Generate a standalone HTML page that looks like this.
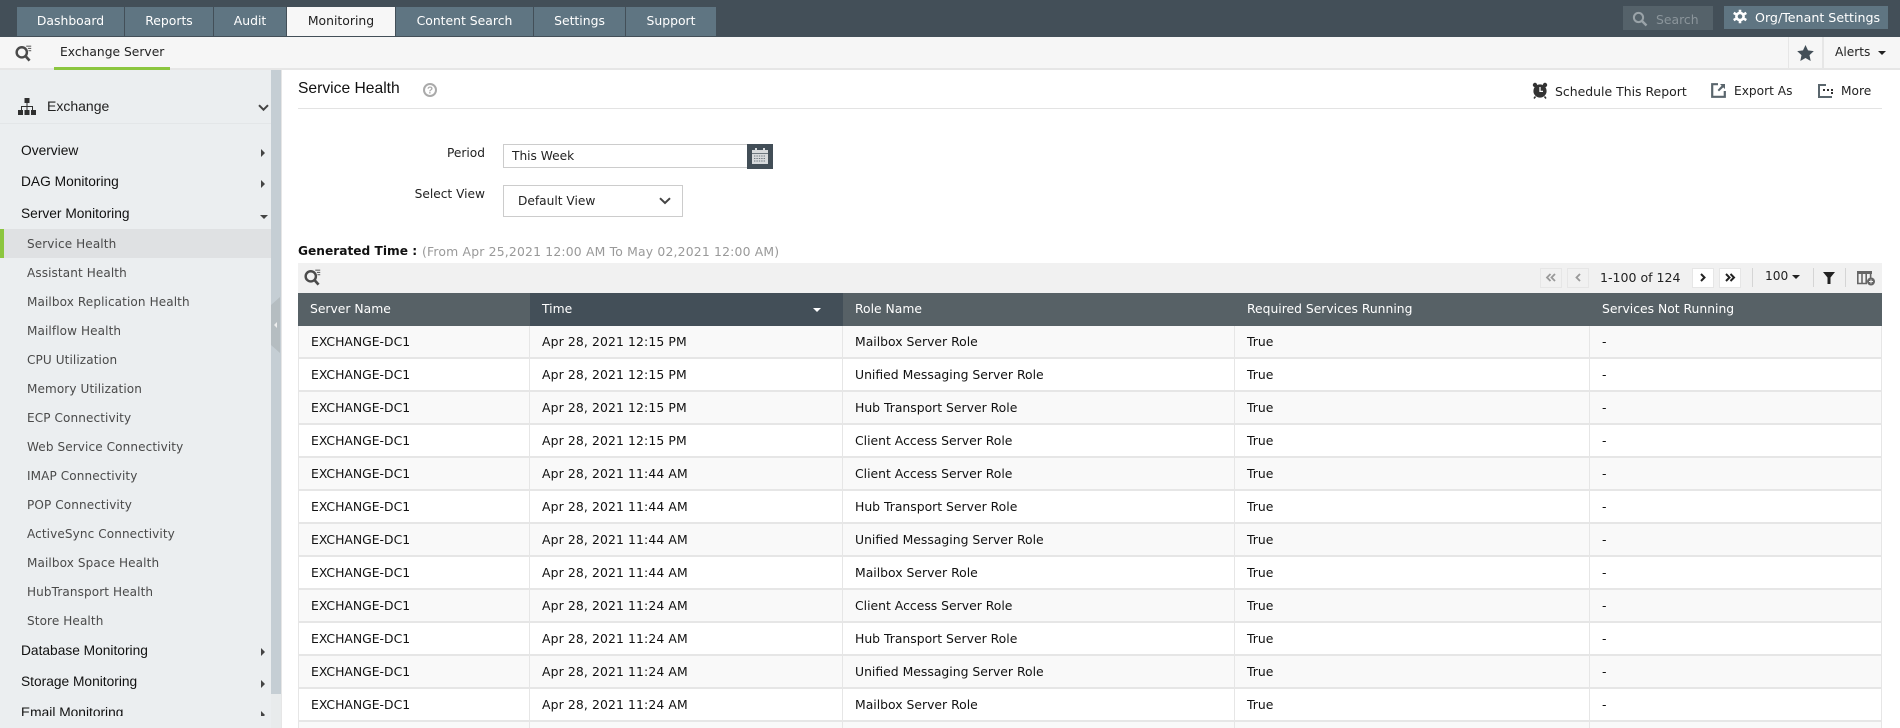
<!DOCTYPE html>
<html><head><meta charset="utf-8"><title>Service Health</title>
<style>
*{box-sizing:border-box}
html,body{margin:0;padding:0;width:1900px;height:728px;overflow:hidden;background:#fff}
body{position:relative;font-family:"DejaVu Sans","Liberation Sans",sans-serif;font-size:12px;color:#111}
.a{position:absolute;white-space:nowrap}
svg{position:absolute;display:block}
.tab{position:absolute;top:7px;height:29px;background:#5f7582;color:#fff;text-align:center;line-height:28px;font-size:12.4px}
.hd{position:absolute;left:21px;font-family:"Liberation Sans",sans-serif;font-size:13.75px;color:#111;line-height:16px;white-space:nowrap}
.sub{position:absolute;left:27px;font-size:12.05px;color:#4a4a4a;line-height:16px;white-space:nowrap;letter-spacing:.1px}
table{position:absolute;left:298px;top:293px;width:1584px;border-collapse:separate;border-spacing:0;table-layout:fixed}
th{height:33px;background:#576166;color:#fff;font-weight:normal;text-align:left;padding:0 0 2px 12px;font-size:12.35px}
td{height:33px;padding:0 0 0 12px;border-right:1px solid #e6e6e6;border-bottom:2px solid #e6e6e6;font-size:12.4px;color:#111;white-space:nowrap;overflow:hidden}
td:first-child{border-left:1px solid #e6e6e6}
td:nth-child(2){letter-spacing:.12px}
tr:nth-child(odd) td{background:#f9f9f9}
tr:nth-child(even) td{background:#fff}
.pg{position:absolute;top:268px;width:22px;height:20px;border:1px solid #e6e6e6;background:#fff}
.div{position:absolute;top:268px;width:1px;height:19px;background:#d5d5d5}
</style></head><body>

<div class="a" style="left:0;top:0;width:1900px;height:37px;background:#434f58"></div>
<div class="tab" style="left:17px;width:107px">Dashboard</div>
<div class="tab" style="left:125px;width:88px">Reports</div>
<div class="tab" style="left:214px;width:72px">Audit</div>
<div class="tab" style="left:287px;width:108px;background:#f7f7f7;color:#222">Monitoring</div>
<div class="tab" style="left:396px;width:137px">Content Search</div>
<div class="tab" style="left:534px;width:91px">Settings</div>
<div class="tab" style="left:626px;width:90px">Support</div>

<div class="a" style="left:1623px;top:6px;width:90px;height:24px;background:#55626a"></div>
<svg style="left:1632px;top:11px" width="16" height="16" viewBox="0 0 16 16"><circle cx="6.5" cy="6.5" r="4.6" fill="none" stroke="#9aa3a8" stroke-width="2"/><path d="M10 10l4.5 4.5" stroke="#9aa3a8" stroke-width="2.4"/></svg>
<div class="a" style="left:1656px;top:11px;font-size:12.4px;color:#8b959b;line-height:17px">Search</div>
<div class="a" style="left:1724px;top:6px;width:164px;height:23px;background:#5f7582"></div>
<svg style="left:1733px;top:9px" width="14" height="15" viewBox="0 0 14 14"><circle cx="7" cy="7" r="3.6" fill="none" stroke="#fff" stroke-width="2.6"/><path d="M7 .3v2.6M7 11v2.7M.7 3.4l2.3 1.3M11 9.3l2.3 1.3M.7 10.6L3 9.3M11 4.7l2.3-1.3" stroke="#fff" stroke-width="2.6"/></svg>
<div class="a" style="left:1755px;top:9px;font-size:12.65px;color:#fff;line-height:17px">Org/Tenant Settings</div>

<div class="a" style="left:0;top:37px;width:1900px;height:33px;background:#f6f6f6;border-bottom:2px solid #e6e6e6"></div>
<svg style="left:14px;top:44px" width="20" height="20" viewBox="0 0 18 18"><circle cx="7" cy="7.5" r="4.6" fill="none" stroke="#4a4a4a" stroke-width="2.2"/><path d="M10.5 11l3.5 4" stroke="#4a4a4a" stroke-width="2.4"/><path d="M11 2h4.5M12.5 4h3M13 6h2.5" stroke="#666" stroke-width="1"/></svg>
<div class="a" style="left:60px;top:44px;font-size:12.3px;color:#222;line-height:17px">Exchange Server</div>
<div class="a" style="left:54px;top:67px;width:116px;height:3px;background:#8cc63f"></div>
<div class="a" style="left:1788px;top:37px;width:1px;height:32px;background:#e6e6e6"></div>
<div class="a" style="left:1822px;top:37px;width:2px;height:32px;background:#e6e6e6"></div>
<svg style="left:1797px;top:45px" width="17" height="16" viewBox="0 0 17 16"><path d="M8.5 0l2.5 5.4 5.8.7-4.3 4 1.2 5.9-5.2-3-5.2 3 1.2-5.9L.2 6.1 6 5.4z" fill="#434f58"/></svg>
<div class="a" style="left:1835px;top:44px;font-size:12.2px;color:#222;line-height:17px">Alerts</div>
<div class="a" style="left:1878px;top:51px;border:4.5px solid transparent;border-top:4.5px solid #222;border-bottom:0"></div>

<!-- sidebar -->
<div class="a" style="left:0;top:70px;width:271px;height:658px;background:#ebeef0"></div>
<div class="a" style="left:271px;top:70px;width:10px;height:624px;background:#c5ced4"></div>
<div class="a" style="left:271px;top:694px;width:10px;height:34px;background:#e8ebec"></div>
<div class="a" style="left:281px;top:70px;width:1px;height:658px;background:#e6e6e6"></div>
<div class="a" style="left:0;top:123px;width:271px;height:1px;background:#e3e6e8"></div>
<svg style="left:18px;top:98px" width="18" height="18" viewBox="0 0 18 18" fill="#2f2f2f"><rect x="6.5" y="0" width="5" height="5"/><rect x="8.5" y="5" width="1" height="3"/><rect x="3" y="8" width="12" height="1"/><rect x="3" y="8" width="1" height="4"/><rect x="8.5" y="8" width="1" height="4"/><rect x="14" y="8" width="1" height="4"/><rect x="0" y="12" width="5" height="5"/><rect x="6.5" y="12" width="5" height="5"/><rect x="13" y="12" width="5" height="5"/></svg>
<div class="a" style="left:47px;top:97px;font-family:'Liberation Sans',sans-serif;font-size:14px;color:#222;line-height:18px">Exchange</div>
<svg style="left:258px;top:104px" width="11" height="8" viewBox="0 0 11 8"><path d="M1 1.2l4.5 4.5L10 1.2" fill="none" stroke="#444" stroke-width="2"/></svg>

<div class="hd" style="top:143px">Overview</div>
<div class="a" style="left:261px;top:149px;border:4px solid transparent;border-left:4.5px solid #444;border-right:0"></div>
<div class="hd" style="top:174px">DAG Monitoring</div>
<div class="a" style="left:261px;top:180px;border:4px solid transparent;border-left:4.5px solid #444;border-right:0"></div>
<div class="hd" style="top:206px">Server Monitoring</div>
<div class="a" style="left:260px;top:215px;border:4px solid transparent;border-top:4.5px solid #444;border-bottom:0"></div>

<div class="a" style="left:0;top:229px;width:271px;height:29px;background:#dfe1e3"></div>
<div class="a" style="left:0;top:229px;width:4px;height:29px;background:#8cc63f"></div>
<div class="sub" style="top:236px">Service Health</div>
<div class="sub" style="top:265px">Assistant Health</div>
<div class="sub" style="top:294px">Mailbox Replication Health</div>
<div class="sub" style="top:323px">Mailflow Health</div>
<div class="sub" style="top:352px">CPU Utilization</div>
<div class="sub" style="top:381px">Memory Utilization</div>
<div class="sub" style="top:410px">ECP Connectivity</div>
<div class="sub" style="top:439px">Web Service Connectivity</div>
<div class="sub" style="top:468px">IMAP Connectivity</div>
<div class="sub" style="top:497px">POP Connectivity</div>
<div class="sub" style="top:526px">ActiveSync Connectivity</div>
<div class="sub" style="top:555px">Mailbox Space Health</div>
<div class="sub" style="top:584px">HubTransport Health</div>
<div class="sub" style="top:613px">Store Health</div>
<div class="hd" style="top:643px">Database Monitoring</div>
<div class="a" style="left:261px;top:648px;border:4px solid transparent;border-left:4.5px solid #444;border-right:0"></div>
<div class="hd" style="top:674px">Storage Monitoring</div>
<div class="a" style="left:261px;top:680px;border:4px solid transparent;border-left:4.5px solid #444;border-right:0"></div>
<div class="a" style="left:0;top:700px;width:271px;height:16px;overflow:hidden">
<div class="hd" style="top:5px">Email Monitoring</div>
<div class="a" style="left:261px;top:11px;border:4px solid transparent;border-left:4.5px solid #444;border-right:0"></div></div>
<svg style="left:271px;top:297px" width="10" height="56" viewBox="0 0 10 56"><path d="M0 8L9 0v56L0 48z" fill="#b5bdc1"/><path d="M6 25v6l-3-3z" fill="#eee"/></svg>

<!-- title row -->
<div class="a" style="left:298px;top:80px;font-family:'Liberation Sans',sans-serif;font-size:15.65px;color:#111;line-height:18px">Service Health</div>
<svg style="left:423px;top:83px" width="14" height="14" viewBox="0 0 14 14"><circle cx="7" cy="7" r="6" fill="none" stroke="#aaa" stroke-width="2"/><text x="7" y="10.4" text-anchor="middle" font-family="Liberation Sans" font-size="10" font-weight="bold" fill="#aaa">?</text></svg>
<svg style="left:1532px;top:82px" width="16" height="17" viewBox="0 0 16 17"><circle cx="8" cy="9" r="6.6" fill="#333"/><circle cx="3" cy="3" r="2.2" fill="#333"/><circle cx="13" cy="3" r="2.2" fill="#333"/><path d="M8 5v4.4h3" fill="none" stroke="#fff" stroke-width="1.3"/><path d="M3.5 14.5L2 16.5M12.5 14.5l1.5 2" stroke="#333" stroke-width="1.5"/></svg>
<div class="a" style="left:1555px;top:83px;font-size:12.45px;color:#222;line-height:17px">Schedule This Report</div>
<svg style="left:1711px;top:83px" width="15" height="15" viewBox="0 0 15 15"><path d="M7 1.2H1.2v12.6h12.6V8" fill="none" stroke="#5a666d" stroke-width="2.2"/><path d="M9 1h5v5l-1.8-1.6L8 8.4 6.6 7l4-4.2z" fill="#5a666d"/></svg>
<div class="a" style="left:1734px;top:83px;font-size:12.2px;color:#222;line-height:17px">Export As</div>
<svg style="left:1818px;top:84px" width="15" height="14" viewBox="0 0 15 14"><path d="M1 0v13h13" fill="none" stroke="#5a666d" stroke-width="2"/><path d="M1 1h7" stroke="#5a666d" stroke-width="2"/><path d="M5 6h2M9 6h2M13 6h2M13 9h2" stroke="#333" stroke-width="2"/></svg>
<div class="a" style="left:1841px;top:83px;font-size:12.2px;color:#222;line-height:17px">More</div>
<div class="a" style="left:298px;top:108px;width:1584px;height:1px;background:#e3e3e3"></div>

<!-- form -->
<div class="a" style="left:385px;width:100px;top:145px;text-align:right;font-size:12.2px;color:#222;line-height:17px">Period</div>
<div class="a" style="left:503px;top:144px;width:245px;height:24px;border:1px solid #ccc;background:#fff"></div>
<div class="a" style="left:512px;top:148px;font-size:12.2px;color:#222;line-height:17px">This Week</div>
<div class="a" style="left:747px;top:144px;width:26px;height:25px;background:#424e57"></div>
<svg style="left:752px;top:148px" width="16" height="16" viewBox="0 0 16 16"><rect x="0" y="2" width="16" height="14" fill="#d7dadc"/><rect x="3" y="0" width="2" height="4" fill="#d7dadc"/><rect x="11" y="0" width="2" height="4" fill="#d7dadc"/><path d="M2 8h12M2 10.5h12M2 13h12" stroke="#6d777e" stroke-width="1" stroke-dasharray="1.4 1"/><rect x="0" y="5" width="16" height="1" fill="#6d777e"/></svg>
<div class="a" style="left:385px;width:100px;top:186px;text-align:right;font-size:12.2px;color:#222;line-height:17px">Select View</div>
<div class="a" style="left:503px;top:185px;width:180px;height:32px;border:1px solid #ccc;background:#fff"></div>
<div class="a" style="left:518px;top:193px;font-size:12.2px;color:#222;line-height:17px">Default View</div>
<svg style="left:659px;top:197px" width="12" height="8" viewBox="0 0 12 8"><path d="M1 1.2l5 4.8 5-4.8" fill="none" stroke="#444" stroke-width="2"/></svg>

<div class="a" style="left:298px;top:243px;font-size:12.2px;font-weight:bold;color:#111;line-height:17px">Generated Time :</div>
<div class="a" style="left:422px;top:243px;font-size:12.4px;color:#999;line-height:17px;letter-spacing:.18px">(From Apr 25,2021 12:00 AM To May 02,2021 12:00 AM)</div>

<!-- toolbar -->
<div class="a" style="left:298px;top:263px;width:1584px;height:30px;background:#f1f1f1"></div>
<svg style="left:303px;top:268px" width="20" height="20" viewBox="0 0 18 18"><circle cx="7" cy="7.5" r="4.6" fill="none" stroke="#4a4a4a" stroke-width="2.2"/><path d="M10.5 11l3.5 4" stroke="#4a4a4a" stroke-width="2.4"/><path d="M11 2h4.5M12.5 4h3M13 6h2.5" stroke="#666" stroke-width="1"/></svg>
<div class="pg" style="left:1540px;background:#f1f1f1"></div>
<svg style="left:1545px;top:273px" width="12" height="9" viewBox="0 0 12 9"><path d="M5.5 1L2 4.5 5.5 8M10 1L6.5 4.5 10 8" fill="none" stroke="#999" stroke-width="1.8"/></svg>
<div class="pg" style="left:1567px;background:#f1f1f1"></div>
<svg style="left:1574px;top:273px" width="8" height="9" viewBox="0 0 8 9"><path d="M6 1L2.5 4.5 6 8" fill="none" stroke="#999" stroke-width="1.8"/></svg>
<div class="a" style="left:1600px;top:269px;font-size:12.55px;color:#222;line-height:17px">1-100 of 124</div>
<div class="pg" style="left:1692px"></div>
<svg style="left:1699px;top:273px" width="8" height="9" viewBox="0 0 8 9"><path d="M2 1l3.5 3.5L2 8" fill="none" stroke="#222" stroke-width="2"/></svg>
<div class="pg" style="left:1719px"></div>
<svg style="left:1724px;top:273px" width="12" height="9" viewBox="0 0 12 9"><path d="M2 1l3.5 3.5L2 8M6.5 1L10 4.5 6.5 8" fill="none" stroke="#222" stroke-width="2"/></svg>
<div class="div" style="left:1752px"></div>
<div class="a" style="left:1765px;top:268px;font-size:12.2px;color:#222;line-height:17px">100</div>
<div class="a" style="left:1792px;top:275px;border:4px solid transparent;border-top:4px solid #222;border-bottom:0"></div>
<div class="div" style="left:1813px"></div>
<svg style="left:1823px;top:272px" width="12" height="12" viewBox="0 0 12 12"><path d="M0 0h12L7.5 5.5V12h-3V5.5z" fill="#222"/></svg>
<div class="div" style="left:1845px"></div>
<svg style="left:1857px;top:271px" width="19" height="15" viewBox="0 0 19 15"><rect x="0" y="0" width="15" height="3" fill="#666"/><path d="M.8 3v9.5M5 3v9.5M9.2 3v9.5M13.6 3v5M0 12.5h10" stroke="#666" stroke-width="1.6"/><circle cx="14" cy="10.5" r="4" fill="#666"/><path d="M12 10.5h4M14 8.5v4" stroke="#f1f1f1" stroke-width="1"/></svg>

<table>
<colgroup><col style="width:232px"><col style="width:313px"><col style="width:392px"><col style="width:355px"><col style="width:292px"></colgroup>
<thead><tr><th>Server Name</th><th style="background:#434f58;position:relative">Time<span style="position:absolute;left:283px;top:15px;width:0;height:0;border:4.5px solid transparent;border-top:4.5px solid #fff;border-bottom:0"></span></th><th>Role Name</th><th>Required Services Running</th><th>Services Not Running</th></tr></thead>
<tbody>
<tr><td>EXCHANGE-DC1</td><td>Apr 28, 2021 12:15 PM</td><td>Mailbox Server Role</td><td>True</td><td>-</td></tr>
<tr><td>EXCHANGE-DC1</td><td>Apr 28, 2021 12:15 PM</td><td>Unified Messaging Server Role</td><td>True</td><td>-</td></tr>
<tr><td>EXCHANGE-DC1</td><td>Apr 28, 2021 12:15 PM</td><td>Hub Transport Server Role</td><td>True</td><td>-</td></tr>
<tr><td>EXCHANGE-DC1</td><td>Apr 28, 2021 12:15 PM</td><td>Client Access Server Role</td><td>True</td><td>-</td></tr>
<tr><td>EXCHANGE-DC1</td><td>Apr 28, 2021 11:44 AM</td><td>Client Access Server Role</td><td>True</td><td>-</td></tr>
<tr><td>EXCHANGE-DC1</td><td>Apr 28, 2021 11:44 AM</td><td>Hub Transport Server Role</td><td>True</td><td>-</td></tr>
<tr><td>EXCHANGE-DC1</td><td>Apr 28, 2021 11:44 AM</td><td>Unified Messaging Server Role</td><td>True</td><td>-</td></tr>
<tr><td>EXCHANGE-DC1</td><td>Apr 28, 2021 11:44 AM</td><td>Mailbox Server Role</td><td>True</td><td>-</td></tr>
<tr><td>EXCHANGE-DC1</td><td>Apr 28, 2021 11:24 AM</td><td>Client Access Server Role</td><td>True</td><td>-</td></tr>
<tr><td>EXCHANGE-DC1</td><td>Apr 28, 2021 11:24 AM</td><td>Hub Transport Server Role</td><td>True</td><td>-</td></tr>
<tr><td>EXCHANGE-DC1</td><td>Apr 28, 2021 11:24 AM</td><td>Unified Messaging Server Role</td><td>True</td><td>-</td></tr>
<tr><td>EXCHANGE-DC1</td><td>Apr 28, 2021 11:24 AM</td><td>Mailbox Server Role</td><td>True</td><td>-</td></tr>
<tr><td>&nbsp;</td><td>&nbsp;</td><td>&nbsp;</td><td>&nbsp;</td><td>&nbsp;</td></tr>
</tbody></table>
</body></html>
